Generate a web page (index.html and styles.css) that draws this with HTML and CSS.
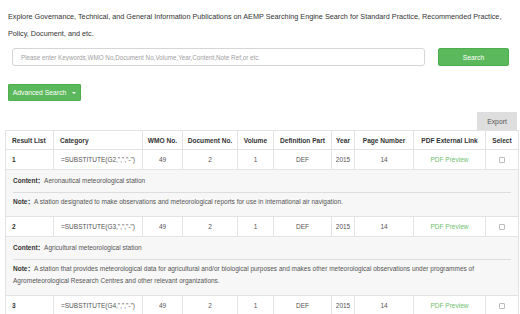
FILE: index.html
```
<!DOCTYPE html>
<html>
<head>
<meta charset="utf-8">
<link rel="stylesheet" href="styles.css">
</head>
<body>
<div class="page">
  <p class="intro">Explore Governance, Technical, and General Information Publications on AEMP Searching Engine Search for Standard Practice, Recommended Practice, Policy, Document, and etc.</p>
  <div class="search-row">
    <input class="search-input" type="text" placeholder="Please enter Keywords,WMO No,Document No,Volume,Year,Content,Note Ref,or etc.">
    <button class="btn btn-search">Search</button>
  </div>
  <div class="adv-row">
    <button class="btn btn-adv">Advanced Search <span class="caret"></span></button>
  </div>
  <div class="export-row">
    <button class="btn-export">Export</button>
  </div>
  <table class="results">
    <colgroup>
      <col class="c1"><col class="c2"><col class="c3"><col class="c4"><col class="c5"><col class="c6"><col class="c7"><col class="c8"><col class="c9"><col class="c10">
    </colgroup>
    <thead>
      <tr>
        <th class="left">Result List</th><th class="left">Category</th><th>WMO No.</th><th>Document No.</th><th>Volume</th><th>Definition Part</th><th>Year</th><th>Page Number</th><th>PDF External Link</th><th>Select</th>
      </tr>
    </thead>
    <tbody>
      <tr class="data">
        <td class="left num">1</td><td class="cat">=SUBSTITUTE(G2,",","-")</td><td>49</td><td>2</td><td>1</td><td>DEF</td><td>2015</td><td>14</td><td class="link">PDF Preview</td><td><span class="check"></span></td>
      </tr>
      <tr class="detail">
        <td colspan="10">
          <div class="content"><b>Content：</b>Aeronautical meteorological station</div>
          <div class="note"><b>Note：</b>A station designated to make observations and meteorological reports for use in international air navigation.</div>
        </td>
      </tr>
      <tr class="data">
        <td class="left num">2</td><td class="cat">=SUBSTITUTE(G3,",","-")</td><td>49</td><td>2</td><td>1</td><td>DEF</td><td>2015</td><td>14</td><td class="link">PDF Preview</td><td><span class="check"></span></td>
      </tr>
      <tr class="detail">
        <td colspan="10">
          <div class="content"><b>Content：</b>Agricultural meteorological station</div>
          <div class="note"><b>Note：</b>A station that provides meteorological data for agricultural and/or biological purposes and makes other meteorological observations under programmes of Agrometeorological Research Centres and other relevant organizations.</div>
        </td>
      </tr>
      <tr class="data">
        <td class="left num">3</td><td class="cat">=SUBSTITUTE(G4,",","-")</td><td>49</td><td>2</td><td>1</td><td>DEF</td><td>2015</td><td>14</td><td class="link">PDF Preview</td><td><span class="check"></span></td>
      </tr>
    </tbody>
  </table>
</div>
</body>
</html>
```
FILE: styles.css
```
* { box-sizing: border-box; }
html, body { margin: 0; padding: 0; background: #fff; }
body {
  font-family: "Liberation Sans", Arial, "Noto Sans CJK SC", sans-serif;
  color: #333;
  font-size: 7px;
  overflow: hidden;
}
.page { width: 520px; }
.intro {
  margin: 8px 14px 0 8px;
  font-size: 7.25px;
  line-height: 17px;
  color: #333;
}
.search-row {
  display: flex;
  align-items: center;
  margin: 6px 0 0 12px;
  height: 18px;
}
.search-input {
  width: 413px;
  height: 18px;
  border: 1px solid #d6d6d6;
  border-radius: 3px;
  padding: 0 8px;
  font-family: "Liberation Sans", Arial, sans-serif;
  font-size: 6.3px;
  color: #555;
  outline: none;
}
.search-input::placeholder { color: #a0a0a0; }
.btn {
  border: 1px solid #4cae4c;
  background: #5cb85c;
  color: #fff;
  font-family: "Liberation Sans", Arial, sans-serif;
  font-size: 6.8px;
  border-radius: 2px;
  padding: 0;
}
.btn-search {
  margin-left: 13px;
  width: 71px;
  height: 18px;
}
.adv-row {
  margin: 18px 0 0 8px;
  display: flex;
}
.btn-adv {
  width: 73px;
  height: 17px;
  display: flex;
  align-items: center;
  justify-content: center;
  gap: 6px;
  border-radius: 1px;
}
.caret {
  width: 0; height: 0;
  border-left: 2px solid transparent;
  border-right: 2px solid transparent;
  border-top: 2px solid #fff;
}
.export-row {
  display: flex;
  justify-content: flex-end;
  margin-top: 11px;
  padding-right: 3px;
}
.btn-export {
  width: 40px;
  height: 18px;
  border: none;
  background: #dedede;
  color: #555;
  font-family: "Liberation Sans", Arial, sans-serif;
  font-size: 6.8px;
  padding: 0;
}
.results {
  margin-left: 5px;
  width: 513px;
  table-layout: fixed;
  border-collapse: collapse;
  font-size: 6.5px;
}
.c1 { width: 48px; } .c2 { width: 89px; } .c3 { width: 40px; } .c4 { width: 55px; } .c5 { width: 36px; }
.c6 { width: 58px; } .c7 { width: 23px; } .c8 { width: 59px; } .c9 { width: 72px; } .c10 { width: 33px; }
.results th, .results td {
  border: 1px solid #e3e3e3;
  text-align: center;
  padding: 0 2px;
  white-space: nowrap;
  overflow: hidden;
}
.results th {
  font-weight: bold;
  height: 19px;
  color: #333;
  font-size: 6.6px;
}
.results th.left, .results td.left { text-align: left; padding-left: 6px; }
.results td.num { font-weight: bold; color: #333; }
.data td { height: 20px; background: #fff; color: #555; }
.results .data td.link { color: #6cbf6c; }
.check {
  display: inline-block;
  width: 6px; height: 6px;
  border: 1px solid #bbb;
  border-radius: 1px;
  vertical-align: middle;
}
.detail td {
  background: #f7f7f7;
  text-align: left;
  padding: 4px 7px 8px 7px;
  white-space: normal;
  color: #555;
}
.detail b { color: #333; }
.content {
  line-height: 14px;
  padding-bottom: 4px;
  border-bottom: 1px solid #ddd;
}
.note {
  padding-top: 3px;
  line-height: 12px;
}
```
